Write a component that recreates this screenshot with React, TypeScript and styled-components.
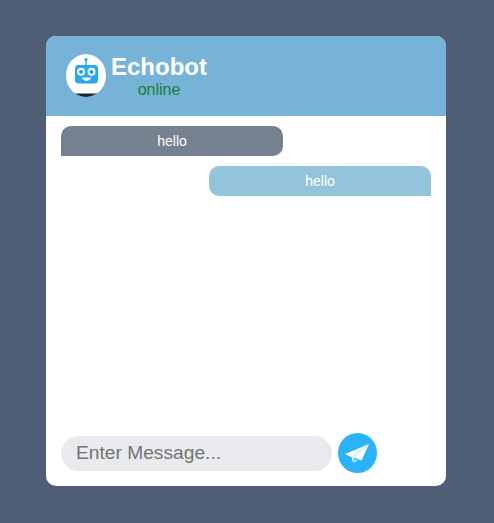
import styled, { createGlobalStyle } from "styled-components";

const GlobalStyle = createGlobalStyle`
  html, body {
    margin: 0;
    height: 100%;
  }
  body {
    background: #4f5d75;
    font-family: "Liberation Sans", Arial, sans-serif;
  }
`;

const Page = styled.div`
  width: 494px;
  height: 523px;
  padding: 36px 0 0 46px;
  box-sizing: border-box;
`;

const Card = styled.div`
  width: 400px;
  height: 450px;
  background: #fff;
  border-radius: 10px;
  overflow: hidden;
  display: flex;
  flex-direction: column;
`;

const Header = styled.header`
  height: 80px;
  background: #76b3d7;
  display: flex;
  align-items: center;
  padding: 0 0 0 20px;
  gap: 5px;
  box-sizing: border-box;
`;

const Avatar = styled.div`
  width: 40px;
  height: 43px;
  border-radius: 50%;
  overflow: hidden;
  flex: none;
  margin-bottom: 1px;
`;

const HeaderText = styled.div`
  display: flex;
  flex-direction: column;
  align-items: center;
  padding-top: 1px;
`;

const BotName = styled.div`
  color: #fff;
  font-size: 24px;
  font-weight: 700;
  line-height: 26px;
`;

const Status = styled.div`
  color: #178037;
  font-size: 16px;
  line-height: 18px;
  margin-top: 1px;
`;

const Messages = styled.div`
  flex: 1;
  padding: 10px 15px;
  display: flex;
  flex-direction: column;
  gap: 10px;
`;

const Bubble = styled.div<{ $mine?: boolean }>`
  width: 222px;
  height: 30px;
  align-self: ${(p) => (p.$mine ? "flex-end" : "flex-start")};
  background: ${(p) => (p.$mine ? "#94c3dc" : "#76818f")};
  border-radius: ${(p) => (p.$mine ? "10px 10px 0 10px" : "10px 10px 10px 0")};
  color: #fff;
  font-size: 14px;
  line-height: 30px;
  text-align: center;
`;

const Composer = styled.form`
  display: flex;
  align-items: center;
  gap: 6px;
  padding: 4px 15px 0;
  height: 70px;
  box-sizing: border-box;
  margin: 0;
`;

const Input = styled.input`
  width: 271px;
  height: 35px;
  border: none;
  outline: none;
  border-radius: 18px;
  background: #e9eaed;
  padding: 0 15px 2px;
  box-sizing: border-box;
  font-family: inherit;
  font-size: 19.2px;
  color: #333;
  margin-top: 1px;

  &::placeholder {
    color: #757575;
    opacity: 1;
  }
`;

const SendButton = styled.button`
  width: 39px;
  height: 40px;
  border: none;
  padding: 0;
  border-radius: 50%;
  background: #2ab4f7;
  display: flex;
  align-items: center;
  justify-content: center;
`;

const RobotLogo = () => (
  <svg width="40" height="43" viewBox="0 0 40 43">
    <rect width="40" height="43" fill="#fff" />
    <rect x="8" y="39.5" width="24" height="4" fill="#1c2333" />
    <rect x="19.3" y="6" width="1.4" height="5.5" fill="#2aa8ec" />
    <circle cx="20" cy="5.5" r="1.6" fill="#2aa8ec" />
    <rect x="9" y="11" width="23" height="18.5" rx="3.5" fill="#2aa8ec" />
    <circle cx="15" cy="17.8" r="4" fill="#e8f7fe" />
    <circle cx="15" cy="17.8" r="1.9" fill="#2a93d2" />
    <circle cx="25.5" cy="17.8" r="4" fill="#e8f7fe" />
    <circle cx="25.5" cy="17.8" r="1.9" fill="#2a93d2" />
    <path d="M16 23.5h9c-.6 2.3-2.4 3.4-4.5 3.4s-3.9-1.1-4.5-3.4z" fill="#fff" />
  </svg>
);

const PlaneIcon = () => (
  <svg width="39" height="40" viewBox="0 0 39 40">
    <path d="M31 11 7 21l6.5 3.2z" fill="#fff" />
    <path d="M31 11 16 24.5l7.5 3z" fill="#fff" />
    <path d="M13.5 24.2 31 11 16 25l-.8 5z" fill="#e6f6fd" />
    <path d="M15.2 30l1.7-4 2.8 1.4z" fill="#c4e8f8" />
  </svg>
);

export default function App() {
  return (
    <>
      <GlobalStyle />
      <Page>
        <Card>
          <Header>
            <Avatar>
              <RobotLogo />
            </Avatar>
            <HeaderText>
              <BotName>Echobot</BotName>
              <Status>online</Status>
            </HeaderText>
          </Header>
          <Messages>
            <Bubble>hello</Bubble>
            <Bubble $mine>hello</Bubble>
          </Messages>
          <Composer onSubmit={(e) => e.preventDefault()}>
            <Input placeholder="Enter Message..." />
            <SendButton type="submit" aria-label="Send">
              <PlaneIcon />
            </SendButton>
          </Composer>
        </Card>
      </Page>
    </>
  );
}
